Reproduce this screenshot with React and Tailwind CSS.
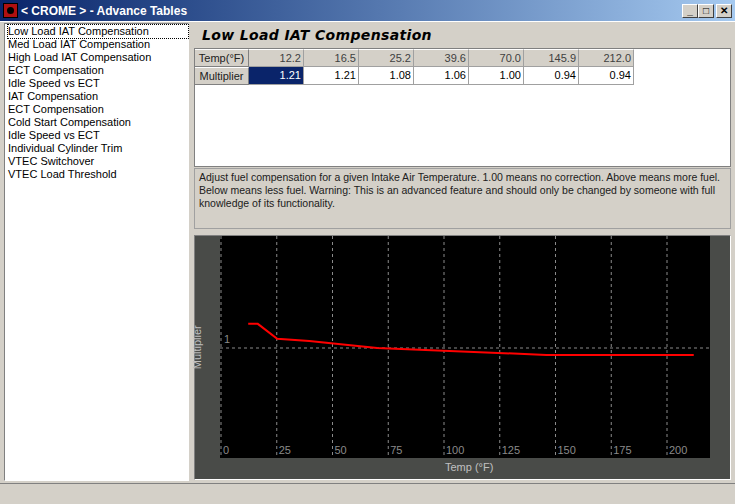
export default function App(){
const items=["Low Load IAT Compensation","Med Load IAT Compensation","High Load IAT Compensation","ECT Compensation","Idle Speed vs ECT","IAT Compensation","ECT Compensation","Cold Start Compensation","Idle Speed vs ECT","Individual Cylinder Trim","VTEC Switchover","VTEC Load Threshold"];
const temps=["12.2","16.5","25.2","39.6","70.0","145.9","212.0"];
const mults=["1.21","1.21","1.08","1.06","1.00","0.94","0.94"];
const data=[[12.2,1.21],[16.5,1.21],[25.2,1.08],[39.6,1.06],[70,1.0],[145.9,0.94],[212,0.94]];
const X=t=>t*2.23+1, Y=m=>112-(m-1)*115;
const pts=data.map(([t,m])=>`${X(t)},${Y(m)}`).join(" ");
return <div className="w-[735px] h-[504px] bg-[#d4d0c8] flex flex-col text-[11px] text-black overflow-hidden" style={{fontFamily:'"Liberation Sans",Arial,sans-serif'}}>
 <div className="h-[22px] flex items-center px-[3px] bg-gradient-to-r from-[#0a246a] to-[#a6caf0] border-b border-white">
  <div className="w-[15px] h-[15px] bg-[#b01010] border border-black flex items-center justify-center"><div className="w-[7px] h-[7px] bg-black rounded-full"/></div>
  <span className="ml-[3px] text-white font-bold text-[12px]">&lt; CROME &gt; - Advance Tables</span>
  <div className="ml-auto flex gap-0">
   {["_","□","✕"].map((c,i)=><div key={i} className={`w-[16px] h-[14px] bg-[#d4d0c8] border border-t-white border-l-white border-b-[#404040] border-r-[#404040] flex items-center justify-center text-[10px] font-bold leading-none ${i==2?"ml-[2px]":""}`}>{c}</div>)}
  </div>
 </div>
 <div className="flex flex-1 pt-[1px] px-[4px] gap-[5px]">
  <div className="w-[185px] h-[458px] bg-white border border-t-[#808080] border-l-[#808080] border-b-white border-r-white pl-[3px] pt-[1px] leading-[13px]">
   {items.map((t,i)=><div key={i} className={i==0?"outline outline-1 outline-dotted outline-black w-[180px]":""}>{t}</div>)}
  </div>
  <div className="flex-1 flex flex-col">
   <div className="h-[25px] pl-[8px] flex items-center italic font-bold text-[14px] tracking-wide" style={{fontFamily:'Verdana,"DejaVu Sans",sans-serif'}}>Low Load IAT Compensation</div>
   <div className="h-[119px] bg-white border border-[#808080] flex flex-col">
    {[["Temp(°F)",temps],["Multiplier",mults]].map(([h,vals],r)=><div key={r} className="flex h-[18px]">
     <div className="w-[54px] bg-[#d4d0c8] border-r border-b border-[#808080] border-t border-t-white flex items-center justify-center text-[#202020]">{h}</div>
     {vals.map((v,i)=><div key={i} className={`w-[55px] border-r border-b border-[#a0a0a0] text-right pr-[2px] flex items-center justify-end ${r==0?"bg-[#d4d0c8] text-[#404040] border-t border-t-white":r==1&&i==0?"bg-[#0a246a] text-white":"bg-white"}`}>{v}</div>)}
    </div>)}
   </div>
   <div className="h-[61px] mt-[1px] bg-[#d4d0c8] border border-[#a0a0a0] px-[4px] pt-[2px] leading-[13px] text-[#202020] text-[10.5px]">Adjust fuel compensation for a given Intake Air Temperature. 1.00 means no correction.  Above means more fuel. Below means less fuel. Warning: This is an advanced feature and should only be changed by someone with full knowledge of its functionality.</div>
   <div className="mt-[6px] h-[245px] bg-[#494b48] border border-t-[#808080] border-l-[#808080] border-white relative">
    <div className="absolute left-[25px] top-0 w-[490px] h-[222px] bg-black">
     <svg width="490" height="222">
      {[0,25,50,75,100,125,150,175,200].map(t=><g key={t}><line x1={X(t)} x2={X(t)} y1="0" y2="222" stroke="#8a8a8a" strokeDasharray="3 3" strokeWidth="1"/>
      <text x={X(t)+2} y="218" fill="#8a8a8a" fontSize="11" fontFamily="Liberation Sans">{t}</text></g>)}
      <line x1="0" x2="490" y1="112" y2="112" stroke="#8a8a8a" strokeDasharray="3 3"/>
      <text x="4" y="107" fill="#8a8a8a" fontSize="11" fontFamily="Liberation Sans">1</text>
      <polyline points={pts} fill="none" stroke="#ff0000" strokeWidth="2"/>
     </svg>
    </div>
    <div className="absolute left-[250px] top-[223px] text-[#c0c0c0]">Temp (°F)</div>
    <div className="absolute left-[-20px] top-[103px] -rotate-90 text-[#c0c0c0]">Multiplier</div>
   </div>
  </div>
 </div>
 <div className="h-[21px] border-t border-[#808080] bg-[#d4d0c8]"></div>
</div>
}
